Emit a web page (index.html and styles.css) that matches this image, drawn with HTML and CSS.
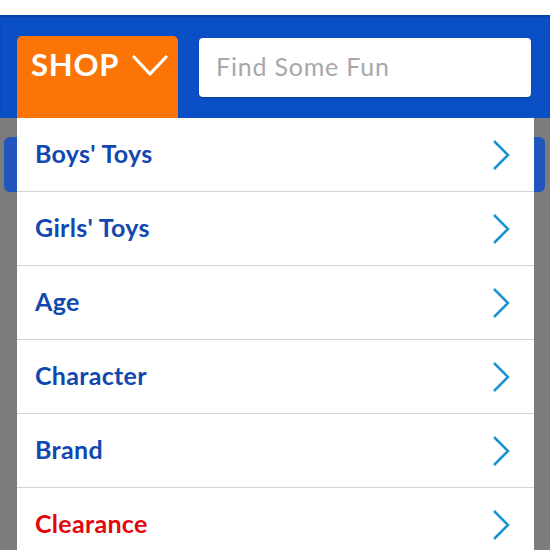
FILE: index.html
```html
<!DOCTYPE html>
<html lang="en">
<head>
    <meta charset="UTF-8">
    <meta name="viewport" content="width=device-width, initial-scale=1.0">
    <title>Shop menu</title>
    <link rel="stylesheet" href="styles.css">
</head>
<body>
    <div class="topbar"></div>
    <header class="header">
        <button class="shop-tab">
            SHOP
            <svg class="shop-chevron" width="36" height="22" viewBox="0 0 36 22">
                <path d="M2 2 L18 19 L34 2" fill="none" stroke="#fff" stroke-width="3.2" stroke-linecap="round" stroke-linejoin="round"/>
            </svg>
        </button>
        <div class="search">
            <input type="text" placeholder="Find Some Fun">
        </div>
    </header>
    <main class="page">
        <!-- content underneath the open menu -->
        <div class="page-button"></div>

        <ul class="menu">
            <li class="menu-item"><span>Boys' Toys</span><svg class="arrow" viewBox="0 0 20 32"><path d="M3 2 L17 16 L3 30"/></svg></li>
            <li class="menu-item"><span>Girls' Toys</span><svg class="arrow" viewBox="0 0 20 32"><path d="M3 2 L17 16 L3 30"/></svg></li>
            <li class="menu-item"><span>Age</span><svg class="arrow" viewBox="0 0 20 32"><path d="M3 2 L17 16 L3 30"/></svg></li>
            <li class="menu-item"><span>Character</span><svg class="arrow" viewBox="0 0 20 32"><path d="M3 2 L17 16 L3 30"/></svg></li>
            <li class="menu-item"><span>Brand</span><svg class="arrow" viewBox="0 0 20 32"><path d="M3 2 L17 16 L3 30"/></svg></li>
            <li class="menu-item clearance"><span>Clearance</span><svg class="arrow" viewBox="0 0 20 32"><path d="M3 2 L17 16 L3 30"/></svg></li>
        </ul>
    </main>
</body>
</html>
```

FILE: styles.css
```css
*{
    box-sizing: border-box;
    font-family: Lato, "Open Sans", sans-serif;
}
body{
    margin: 0;
    background: #fff;
    height: 550px;
    overflow: hidden;
}
.topbar{
    height: 15px;
    background: #fff;
}
.header{
    display: flex;
    align-items: flex-start;
    gap: 21px;
    height: 103px;
    padding: 21px 19px 0 17px;
    background: #0a4fc6;
    box-shadow: inset 0 2px 2px rgba(0,0,0,0.18);
}
.shop-tab{
    display: flex;
    align-items: center;
    gap: 13px;
    width: 161px;
    height: 82px;
    padding: 0 0 27px 14px;
    border: none;
    border-radius: 5px 5px 0 0;
    background: #fd7406;
    color: #fff;
    font-size: 31px;
    font-weight: 700;
    letter-spacing: 0.8px;
}
.shop-chevron{
    margin-top: 4px;
}
.search{
    flex: 1;
    margin-top: 2px;
}
.search input{
    width: 100%;
    height: 59px;
    padding: 0 17px 4px;
    border: none;
    border-radius: 4px;
    background: #fff;
    box-shadow: 0 1px 2px rgba(0,0,0,0.25);
    font-size: 25px;
    letter-spacing: 0.8px;
    font-family: inherit;
    color: #333;
}
.search input::placeholder{
    color: #a8a8a8;
}
.page{
    position: relative;
    height: 432px;
    padding: 19px 5px 0 4px;
    background: #7c7c7c;
}
.page-button{
    height: 55px;
    border-radius: 6px;
    background: #1f55bd;
}
.menu{
    position: absolute;
    top: 0;
    left: 17px;
    width: 517px;
    margin: 0;
    padding: 0;
    list-style: none;
    background: #fff;
}
.menu-item{
    display: flex;
    align-items: center;
    justify-content: space-between;
    height: 74px;
    padding: 0 23px 3px 18px;
    border-bottom: 1px solid #d4d4d4;
    color: #1148b0;
    font-size: 25px;
    font-weight: 700;
    letter-spacing: 0.3px;
}
.clearance{
    color: #e2060d;
}
.arrow{
    width: 20px;
    height: 32px;
    margin-top: 3px;
    fill: none;
    stroke: #2094d2;
    stroke-width: 2.6;
}
```
